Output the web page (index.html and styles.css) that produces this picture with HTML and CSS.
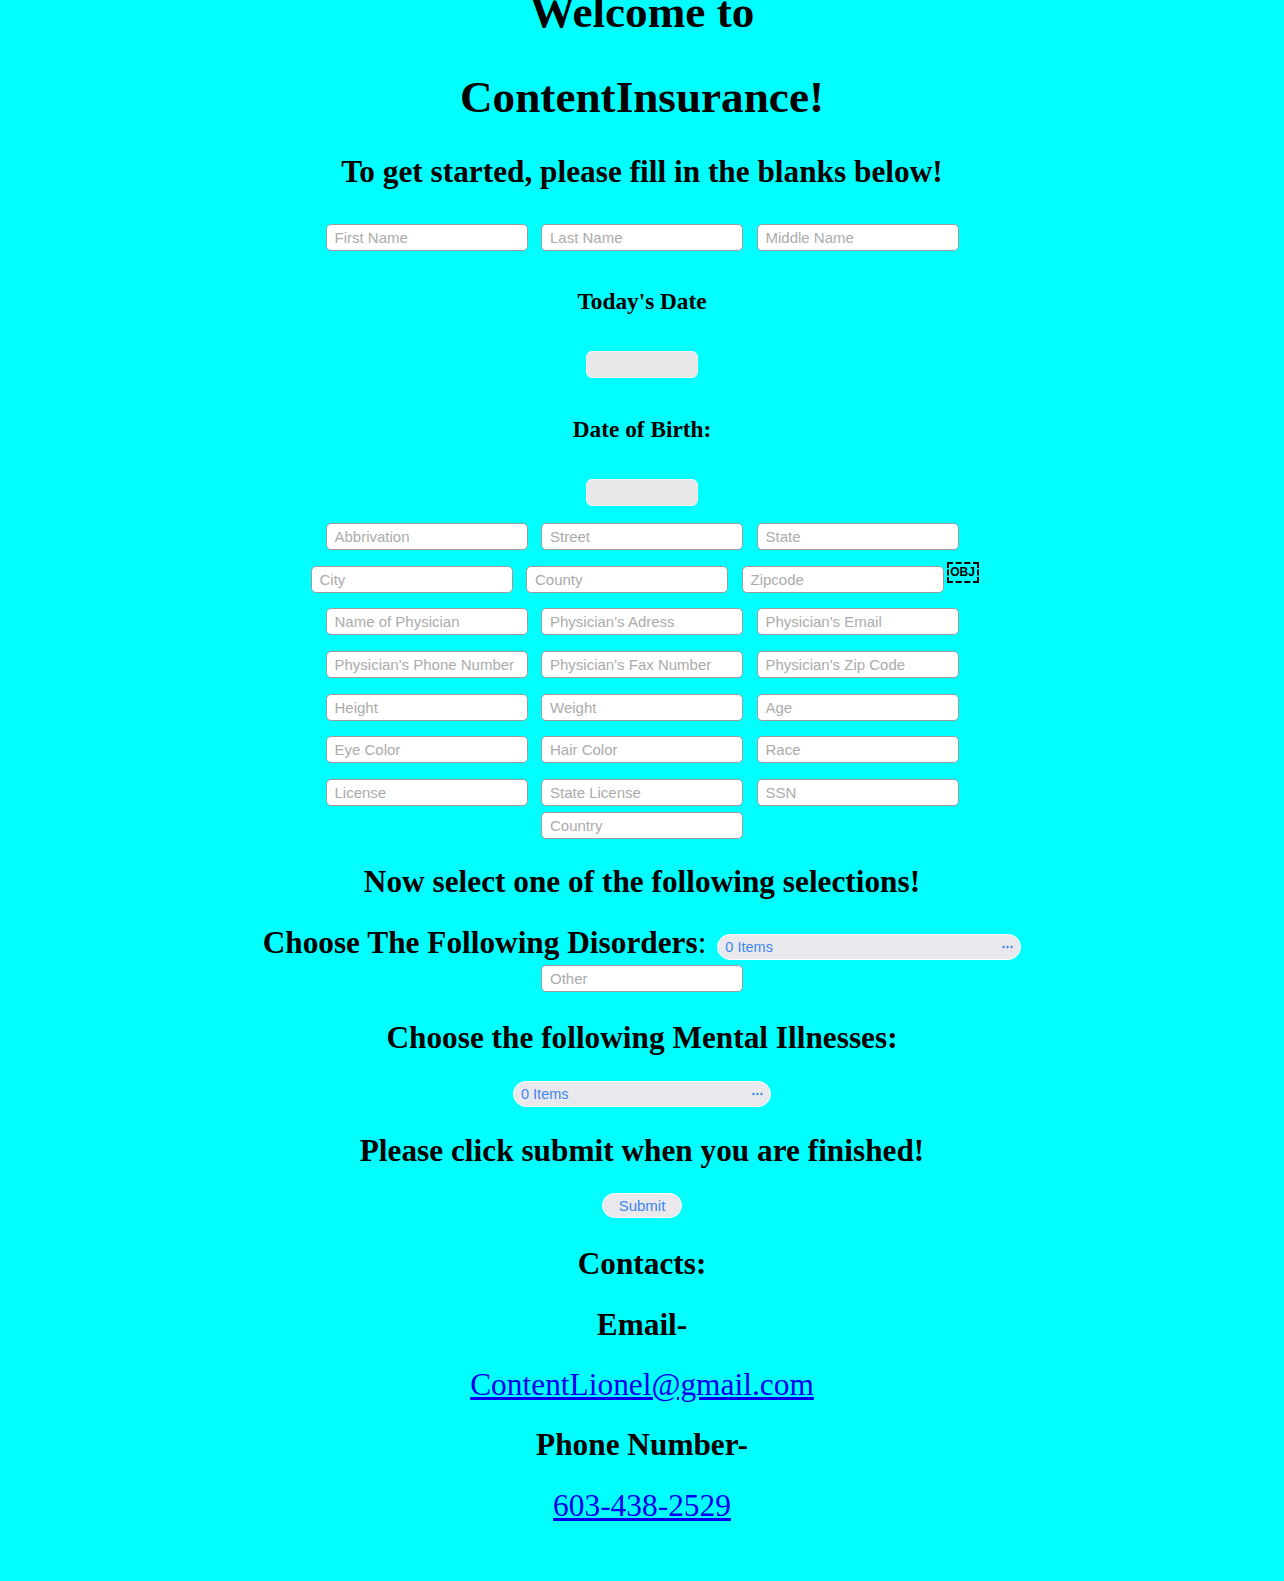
FILE: index.html
```html
<!DOCTYPE html>
<html lang="en">
<head>
<meta charset="utf-8">
<title>ContentInsurance</title>
<link rel="stylesheet" href="styles.css">
</head>
<body>
<main class="page">
  <h1 class="title">Welcome to<br>ContentInsurance!</h1>
  <h2 class="heading lead">To get started, please fill in the blanks below!</h2>

  <div class="row names">
    <input class="field" type="text" placeholder="First Name">
    <input class="field" type="text" placeholder="Last Name">
    <input class="field" type="text" placeholder="Middle Name">
  </div>

  <h3 class="label today">Today's Date</h3>
  <input class="date first-date" type="text" aria-label="Today's Date">

  <h3 class="label birth">Date of Birth:</h3>
  <input class="date second-date" type="text" aria-label="Date of Birth">

  <div class="fields">
    <div class="row">
      <input class="field" type="text" placeholder="Abbrivation">
      <input class="field" type="text" placeholder="Street">
      <input class="field" type="text" placeholder="State">
    </div>
    <div class="row">
      <input class="field" type="text" placeholder="City">
      <input class="field" type="text" placeholder="County">
      <input class="field" type="text" placeholder="Zipcode">
      <span class="obj">OBJ</span>
    </div>
    <div class="row">
      <input class="field" type="text" placeholder="Name of Physician">
      <input class="field" type="text" placeholder="Physician's Adress">
      <input class="field" type="text" placeholder="Physician's Email">
    </div>
    <div class="row">
      <input class="field" type="text" placeholder="Physician's Phone Number">
      <input class="field" type="text" placeholder="Physician's Fax Number">
      <input class="field" type="text" placeholder="Physician's Zip Code">
    </div>
    <div class="row">
      <input class="field" type="text" placeholder="Height">
      <input class="field" type="text" placeholder="Weight">
      <input class="field" type="text" placeholder="Age">
    </div>
    <div class="row">
      <input class="field" type="text" placeholder="Eye Color">
      <input class="field" type="text" placeholder="Hair Color">
      <input class="field" type="text" placeholder="Race">
    </div>
    <div class="row">
      <input class="field" type="text" placeholder="License">
      <input class="field" type="text" placeholder="State License">
      <input class="field" type="text" placeholder="SSN">
    </div>
  </div>
  <input class="field country" type="text" placeholder="Country">

  <h2 class="heading select-title">Now select one of the following selections!</h2>

  <div class="choose-row">
    <h2 class="heading choose-label">Choose The Following Disorders<span class="colon">:</span></h2>
    <button class="picker wide" type="button"><span>0 Items</span><svg class="dots" width="11" height="4" viewBox="0 0 11 4"><circle cx="1.5" cy="2" r="1.2"/><circle cx="5.5" cy="2" r="1.2"/><circle cx="9.5" cy="2" r="1.2"/></svg></button>
  </div>
  <input class="field other" type="text" placeholder="Other">

  <h2 class="heading mental">Choose the following Mental Illnesses:</h2>
  <button class="picker narrow" type="button"><span>0 Items</span><svg class="dots" width="11" height="4" viewBox="0 0 11 4"><circle cx="1.5" cy="2" r="1.2"/><circle cx="5.5" cy="2" r="1.2"/><circle cx="9.5" cy="2" r="1.2"/></svg></button>

  <h2 class="heading finish">Please click submit when you are finished!</h2>
  <button class="submit" type="button">Submit</button>

  <h2 class="heading contacts">Contacts:</h2>
  <h2 class="heading sub email-title">Email-</h2>
  <p class="contact-line email-line"><a href="mailto:ContentLionel@gmail.com">ContentLionel@gmail.com</a></p>
  <h2 class="heading sub phone-title">Phone Number-</h2>
  <p class="contact-line"><a href="tel:6034382529">603-438-2529</a></p>
</main>
</body>
</html>
```

FILE: styles.css
```css
html, body {
  margin: 0;
  padding: 0;
}

body {
  background: #00ffff;
  color: #000;
  font-family: "Liberation Serif", "Times New Roman", serif;
  min-height: 1581px;
  overflow: hidden;
}

.page {
  display: flex;
  flex-direction: column;
  align-items: center;
  text-align: center;
}

.title {
  margin: -30px 0 0;
  font-size: 45.2px;
  line-height: 85px;
  font-weight: bold;
}

.heading {
  margin: 0;
  font-size: 31.3px;
  line-height: 36px;
  font-weight: bold;
}

.label {
  margin: 0;
  font-size: 23.3px;
  line-height: 27px;
  font-weight: bold;
}

.lead { margin-top: 14.4px; }

.row {
  display: flex;
  align-items: flex-start;
  justify-content: center;
  gap: 13.5px;
}

.names { margin-top: 33.6px; }

.field {
  box-sizing: border-box;
  width: 202px;
  height: 27px;
  margin: 0;
  padding: 0 8px;
  border: 1px solid #9c9c9c;
  border-radius: 5px;
  background: #fff;
  font-family: "Liberation Sans", Arial, sans-serif;
  font-size: 15px;
  color: #000;
  outline: none;
}

.field::placeholder {
  color: #ababab;
}

.today { margin-top: 36.6px; }

.date {
  box-sizing: border-box;
  width: 112px;
  height: 27px;
  margin: 0;
  padding: 0;
  border: 1px solid #f4f4f4;
  border-radius: 6px;
  background: #e8e8e8;
  outline: none;
}

.first-date { margin-top: 36.4px; }
.birth { margin-top: 37.6px; }
.second-date { margin-top: 36.4px; }

.fields {
  display: flex;
  flex-direction: column;
  gap: 15.7px;
  margin-top: 17px;
}

.obj {
  box-sizing: border-box;
  display: inline-flex;
  align-items: center;
  justify-content: center;
  width: 32px;
  height: 21px;
  margin: -4px -5px 0 -10.5px;
  border: 2px dashed #000;
  font-family: "Liberation Sans", Arial, sans-serif;
  font-size: 12px;
  font-weight: bold;
  line-height: 1;
}

.country { margin-top: 6px; }

.select-title { margin-top: 25.2px; }

.choose-row {
  display: flex;
  align-items: flex-start;
  justify-content: center;
  gap: 11px;
  margin-top: 23px;
}

.choose-label { margin-top: 2px; }

.colon { font-weight: normal; }

.picker {
  box-sizing: border-box;
  display: flex;
  align-items: center;
  justify-content: space-between;
  height: 26px;
  margin: 0;
  padding: 0 7px 0 7px;
  border: 1.5px solid #fff;
  border-radius: 13px;
  background: #e9e9ed;
  color: #3d86f1;
  font-family: "Liberation Sans", Arial, sans-serif;
  font-size: 14.5px;
  cursor: pointer;
}

.dots { fill: #3d86f1; }

.wide {
  width: 304px;
  margin-top: 10.6px;
}

.narrow {
  width: 258px;
  margin-top: 24.6px;
}

.other { margin-top: 3.6px; }
.mental { margin-top: 28.4px; }
.finish { margin-top: 26.4px; }

.submit {
  box-sizing: border-box;
  width: 80px;
  height: 25px;
  margin: 23.6px 0 0;
  padding: 0;
  border: 1.5px solid #fff;
  border-radius: 13px;
  background: #e9e9ed;
  color: #3d86f1;
  font-family: "Liberation Sans", Arial, sans-serif;
  font-size: 15px;
  cursor: pointer;
}

.contacts { margin-top: 28.4px; }
.email-title { margin-top: 25px; }
.phone-title { margin-top: 24px; }

.contact-line {
  margin: 25px 0 0;
  font-size: 31.4px;
  line-height: 36px;
}

.email-line { margin-top: 24px; }

.contact-line a {
  color: #0000ee;
  text-decoration: underline;
}
```
